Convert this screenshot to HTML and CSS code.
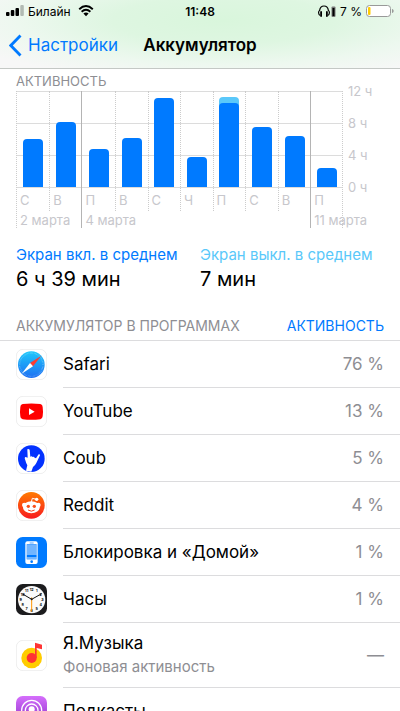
FILE: index.html
```html
<!DOCTYPE html>
<html lang="ru">
  <head>
    <meta charset="utf-8" />
    <meta name="viewport" content="width=device-width, initial-scale=1" />
    <title>Аккумулятор</title>
    <link rel="stylesheet" href="styles.css" />
  </head>
  <body>
    <header class="header">
      <div class="status">
        <div class="status-left">
          <svg width="18" height="12" viewBox="0 0 18 12">
            <rect x="0" y="7" width="3.500" height="4" rx="1" />
            <rect x="4.800" y="5" width="3.500" height="6" rx="1" />
            <rect x="9.500" y="3" width="3.500" height="8" rx="1" />
            <rect x="14.300" y="0" width="3.500" height="11" rx="1" opacity="0.25" />
          </svg>
          <span>Билайн</span>
          <svg width="16" height="12" viewBox="0 0 16 12">
            <path d="M1.200 4.200Q8-2 14.800 4.200M3.600 6.700Q8 2.800 12.400 6.700" fill="none" stroke="#000" stroke-width="1.900" />
            <path d="M5.400 8.500Q8 6.300 10.600 8.500L8 11.200Z" />
          </svg>
        </div>
        <div class="status-time">11:48</div>
        <div class="status-right">
          <svg width="18" height="13" viewBox="0 0 18 13">
            <path d="M2.300 10.500C.2 10 .2 6 1.600 5.500C2 2.500 3.800 1 6 1S10 2.500 10.400 5.500C11.800 6 11.800 10 9.700 10.500" fill="none" stroke="#000" stroke-width="1.200" />
            <rect x="2.200" y="6" width="1.800" height="6" rx="0.900" />
            <rect x="8" y="6" width="1.800" height="6" rx="0.900" />
            <rect x="13.500" y="1.500" width="4" height="10.500" rx="1" fill="#777" />
            <rect x="14.500" y="3" width="2" height="8" />
          </svg>
          <span>7 %</span>
          <svg width="28" height="12" viewBox="0 0 28 12">
            <rect x="0.500" y="0.500" width="24" height="11" rx="3" fill="#fff" stroke="#999" />
            <rect x="2" y="2" width="2.500" height="8" rx="1" fill="#fc0" />
            <path d="M26 4C28.200 4.500 28.200 7.500 26 8Z" fill="#999" />
          </svg>
        </div>
      </div>
      <nav class="nav">
        <a class="back" href="#">
          <svg width="13" height="23" viewBox="0 0 13 23">
            <path d="M11.500 1.500L1.800 11.500L11.500 21.500" fill="none" stroke="#007aff" stroke-width="2.800" />
          </svg>
          Настройки
        </a>
        <h1>Аккумулятор</h1>
      </nav>
    </header>

    <main>
      <section class="activity">
        <h2>АКТИВНОСТЬ</h2>
        <div class="chart">
          <div class="plot">
            <div class="week">
              <div class="days">
                <div class="day"><div class="track"><div class="bar" style="height: 50%"></div></div><span>С</span></div>
                <div class="day"><div class="track"><div class="bar" style="height: 68%"></div></div><span>В</span></div>
              </div>
              <div class="week-label">2 марта</div>
            </div>
            <div class="week full">
              <div class="days">
                <div class="day"><div class="track"><div class="bar" style="height: 40%"></div></div><span>П</span></div>
                <div class="day"><div class="track"><div class="bar" style="height: 51%"></div></div><span>В</span></div>
                <div class="day"><div class="track"><div class="bar" style="height: 93%"></div></div><span>С</span></div>
                <div class="day"><div class="track"><div class="bar" style="height: 31%"></div></div><span>Ч</span></div>
                <div class="day"><div class="track"><div class="bar off" style="height: 94%"><div class="bar" style="height: 93%"></div></div></div><span>П</span></div>
                <div class="day"><div class="track"><div class="bar" style="height: 62%"></div></div><span>С</span></div>
                <div class="day"><div class="track"><div class="bar" style="height: 53%"></div></div><span>В</span></div>
              </div>
              <div class="week-label">4 марта</div>
            </div>
            <div class="week last">
              <div class="days">
                <div class="day"><div class="track"><div class="bar" style="height: 20%"></div></div><span>П</span></div>
              </div>
              <div class="week-label">11 марта</div>
            </div>
          </div>
          <div class="axis">
            <span>12 ч</span>
            <span>8 ч</span>
            <span>4 ч</span>
            <span>0 ч</span>
          </div>
        </div>
        <dl class="averages">
          <div>
            <dt>Экран вкл. в среднем</dt>
            <dd>6 ч 39 мин</dd>
          </div>
          <div class="screen-off">
            <dt>Экран выкл. в среднем</dt>
            <dd>7 мин</dd>
          </div>
        </dl>
      </section>

      <section>
        <div class="list-header">
          <h2>АККУМУЛЯТОР В ПРОГРАММАХ</h2>
          <button type="button">АКТИВНОСТЬ</button>
        </div>
        <ul class="apps">
          <li>
            <svg class="icon" viewBox="0 0 93 93">
              <defs>
                <linearGradient id="safari" x2="0" y2="1">
                  <stop offset="0" stop-color="#1fc8fb" />
                  <stop offset="1" stop-color="#1d6ff2" />
                </linearGradient>
              </defs>
              <rect x="1" y="1" width="91" height="91" rx="20" fill="#fff" stroke="#e5e5e5" stroke-width="2" />
              <circle cx="46" cy="47" r="40" fill="url(#safari)" />
              <circle cx="46" cy="47" r="35" fill="none" stroke="#fff" stroke-width="4" stroke-dasharray="1 3" opacity="0.5" />
              <path d="M76 20L42 42L51 52Z" fill="#ff3b30" />
              <path d="M17 74L42 42L51 52Z" fill="#fff" />
            </svg>
            <div class="row"><span class="name">Safari</span><span class="value">76 %</span></div>
          </li>
          <li>
            <svg class="icon" viewBox="0 0 93 93">
              <rect x="1" y="1" width="91" height="91" rx="20" fill="#fff" stroke="#e5e5e5" stroke-width="2" />
              <path d="M20 24Q46 21 73 24Q80 25 80 33Q82 47 80 61Q79 69 73 70Q46 73 20 70Q13 69 13 61Q11 47 13 33Q13 25 20 24Z" fill="#f00" />
              <path d="M39 37L56 47L39 57Z" fill="#fff" />
            </svg>
            <div class="row"><span class="name">YouTube</span><span class="value">13 %</span></div>
          </li>
          <li>
            <svg class="icon" viewBox="0 0 93 93">
              <rect x="1" y="1" width="91" height="91" rx="20" fill="#fff" stroke="#e5e5e5" stroke-width="2" />
              <circle cx="46" cy="47" r="40" fill="#0332ff" />
              <path d="M34 19Q37 16 41 20L43 41Q47 38 50 42Q53 39 56 44L60 46L68 34Q72 32 72 37L61 60Q57 68 51 72L46 86L30 83L34 67Q30 60 28 52Q24 43 29 42L35 44Z" fill="#fff" />
            </svg>
            <div class="row"><span class="name">Coub</span><span class="value">5 %</span></div>
          </li>
          <li>
            <svg class="icon" viewBox="0 0 93 93">
              <defs>
                <linearGradient id="reddit" x2="0" y2="1">
                  <stop offset="0" stop-color="#ff7a00" />
                  <stop offset="1" stop-color="#f81c20" />
                </linearGradient>
              </defs>
              <rect x="1" y="1" width="91" height="91" rx="20" fill="#fff" stroke="#e5e5e5" stroke-width="2" />
              <circle cx="46" cy="46" r="40" fill="url(#reddit)" />
              <path d="M46 36L49 25L61 28" fill="none" stroke="#fff" stroke-width="3" />
              <circle cx="62" cy="28" r="5" fill="#fff" />
              <circle cx="25" cy="45" r="7" fill="#fff" />
              <circle cx="67" cy="45" r="7" fill="#fff" />
              <ellipse cx="46" cy="52" rx="25" ry="18" fill="#fff" />
              <circle cx="37" cy="49" r="5" fill="#f9501c" />
              <circle cx="55" cy="49" r="5" fill="#f9501c" />
              <path d="M36 60Q46 67 56 60" fill="none" stroke="#f9401c" stroke-width="3" />
            </svg>
            <div class="row"><span class="name">Reddit</span><span class="value">4 %</span></div>
          </li>
          <li>
            <svg class="icon" viewBox="0 0 93 93">
              <defs>
                <pattern id="dots" x="32" y="24" width="6" height="6" patternUnits="userSpaceOnUse">
                  <rect x="1" y="1" width="4" height="4" fill="#fff" />
                </pattern>
              </defs>
              <rect width="93" height="93" rx="20" fill="#007aff" />
              <rect x="28" y="13" width="37" height="68" rx="6" fill="#fff" />
              <rect x="32" y="22" width="30" height="45" fill="#007aff" />
              <rect x="32" y="24" width="30" height="30" fill="url(#dots)" />
              <rect x="32" y="60" width="30" height="6" fill="url(#dots)" />
              <circle cx="47" cy="74" r="4" fill="#007aff" />
              <rect x="41" y="17" width="12" height="2" fill="#007aff" />
            </svg>
            <div class="row"><span class="name">Блокировка и «Домой»</span><span class="value">1 %</span></div>
          </li>
          <li>
            <svg class="icon" viewBox="0 0 93 93">
              <rect width="93" height="93" rx="20" fill="#1c1c1e" />
              <circle cx="47" cy="47" r="41" fill="#fafafa" />
              <g class="clock-digits">
                <text x="47" y="20">12</text>
                <text x="62" y="25">1</text>
                <text x="74" y="36">2</text>
                <text x="79" y="52">3</text>
                <text x="74" y="67">4</text>
                <text x="62" y="78">5</text>
                <text x="47" y="83">6</text>
                <text x="32" y="78">7</text>
                <text x="20" y="67">8</text>
                <text x="14" y="52">9</text>
                <text x="20" y="36">10</text>
                <text x="32" y="25">11</text>
              </g>
              <path d="M20 30L47 46L77 29" fill="none" stroke="#111" stroke-width="3" />
              <path d="M47 40V83" stroke="#ff9500" stroke-width="3" />
              <circle cx="47" cy="46" r="3" fill="#111" />
            </svg>
            <div class="row"><span class="name">Часы</span><span class="value">1 %</span></div>
          </li>
          <li>
            <svg class="icon" viewBox="0 0 93 93">
              <rect x="1" y="1" width="91" height="91" rx="20" fill="#fff" stroke="#e5e5e5" stroke-width="2" />
              <circle cx="47" cy="54" r="31" fill="#fc0" />
              <circle cx="47" cy="54" r="15" fill="#ff3333" />
              <path d="M57 8L78 14V28L62 24V54H57Z" fill="#ff3333" />
            </svg>
            <div class="row tall">
              <div>
                <div class="name">Я.Музыка</div>
                <div class="note">Фоновая активность</div>
              </div>
              <span class="value">—</span>
            </div>
          </li>
          <li>
            <svg class="icon" viewBox="0 0 93 93">
              <defs>
                <linearGradient id="podcasts" x2="0" y2="1">
                  <stop offset="0" stop-color="#d56efc" />
                  <stop offset="1" stop-color="#832bc1" />
                </linearGradient>
              </defs>
              <rect width="93" height="93" rx="20" fill="url(#podcasts)" />
              <g fill="none" stroke="#fff" stroke-width="4">
                <circle cx="47" cy="43" r="30" />
                <circle cx="47" cy="43" r="19" />
              </g>
              <circle cx="47" cy="40" r="9" fill="#fff" />
              <rect x="38" y="52" width="18" height="30" rx="8" fill="#fff" />
            </svg>
            <div class="row"><span class="name">Подкасты</span></div>
          </li>
        </ul>
      </section>
    </main>
  </body>
</html>
```

FILE: styles.css
```css
body {
  margin: 0;
  height: 100vh;
  overflow: hidden;
  background-color: #fff;
  color: #000;
  font-family: Inter, "Liberation Sans", sans-serif;
}
h1,
h2,
dl,
dd,
ul {
  margin: 0;
  padding: 0;
}
svg {
  flex: none;
}
.header {
  background: radial-gradient(ellipse at 56% 30%, #d9f6dc 0%, #def6e1 35%, #edf8ef 65%, #f7f7f7 90%);
  border-bottom: 1px solid #c4c8c5;
}
.status {
  display: grid;
  grid-template-columns: 1fr auto 1fr;
  align-items: center;
  height: 22px;
  padding: 0 6px;
  font-size: 12px;
}
.status-left,
.status-right {
  display: flex;
  align-items: center;
  gap: 4px;
}
.status-right {
  justify-content: flex-end;
}
.status-left svg:last-child {
  margin-left: 3px;
}
.status-time {
  font-weight: 600;
}
.nav {
  display: grid;
  grid-template-columns: 1fr auto 1fr;
  align-items: center;
  height: 46px;
  padding: 0 9px;
}
.back {
  display: flex;
  align-items: center;
  gap: 6px;
  color: #007aff;
  font-size: 17px;
  text-decoration: none;
}
.nav h1 {
  font-size: 17px;
  font-weight: 600;
}
h2 {
  color: #8e8e93;
  font-size: 13px;
  font-weight: 400;
  line-height: 16px;
}
.activity {
  padding: 4px 16px 0;
}
.activity h2 {
  margin-bottom: 2px;
}

/* chart */
.chart {
  display: flex;
  color: #c7c7cc;
  font-size: 13px;
}
.plot {
  flex: 1;
  display: grid;
  grid-template-columns: 2fr 7fr 1fr;
  background: repeating-linear-gradient(#dcdcdc 0 1px, transparent 1px 32px) no-repeat;
  background-size: 100% 97px;
}
.week {
  min-width: 0;
  border-left: 1px dotted #ccc;
}
.week.full,
.week.last {
  border-left: 1px solid #b4b4b4;
}
.week.last {
  border-right: 1px dotted #ccc;
}
.days {
  display: grid;
  grid-auto-flow: column;
  grid-auto-columns: 1fr;
}
.day {
  height: 120px;
}
.day + .day {
  border-left: 1px dotted #ccc;
}
.track {
  display: flex;
  align-items: flex-end;
  justify-content: center;
  height: 96px;
}
.bar {
  width: 20px;
  border-radius: 4px 4px 0 0;
  background-color: #007aff;
}
.bar.off {
  display: flex;
  align-items: flex-end;
  background-color: #5ac8fa;
}
.day span {
  display: block;
  padding: 5px 0 0 3px;
  line-height: 16px;
}
.week-label {
  padding: 1px 0 0 3px;
  line-height: 16px;
  white-space: nowrap;
}
.axis {
  display: flex;
  flex-direction: column;
  gap: 16px;
  width: 36px;
  margin-top: -8px;
  padding-left: 5px;
  line-height: 16px;
}

.averages {
  display: grid;
  grid-template-columns: 1fr 1fr;
  margin-top: 17px;
}
.averages dt {
  color: #007aff;
  font-size: 15px;
  line-height: 20px;
  white-space: nowrap;
}
.averages dd {
  font-size: 20px;
  line-height: 28px;
}
.averages .screen-off dt {
  color: #5ac8fa;
}

/* app list */
.list-header {
  display: flex;
  align-items: center;
  justify-content: space-between;
  padding: 25px 16px 6px;
}
.list-header h2,
.list-header button {
  font-size: 14px;
}
.list-header button {
  padding: 0;
  border: none;
  background: none;
  color: #007aff;
  font-family: inherit;
  line-height: 16px;
}
.apps {
  border-top: 1px solid #dcdcde;
  list-style: none;
}
.apps li {
  display: flex;
  align-items: center;
  gap: 16px;
  padding-left: 16px;
}
.icon {
  width: 31px;
  height: 31px;
}
.row {
  flex: 1;
  display: flex;
  align-items: center;
  justify-content: space-between;
  height: 46px;
  padding-right: 16px;
  border-bottom: 1px solid #dcdcde;
}
.row.tall {
  height: 64px;
}
.name {
  font-size: 17px;
  line-height: 24px;
}
.note {
  color: #8e8e93;
  font-size: 15px;
  line-height: 24px;
}
.value {
  color: #8e8e93;
  font-size: 17px;
}
.clock-digits {
  font-size: 11px;
  font-weight: 700;
  text-anchor: middle;
}
```
